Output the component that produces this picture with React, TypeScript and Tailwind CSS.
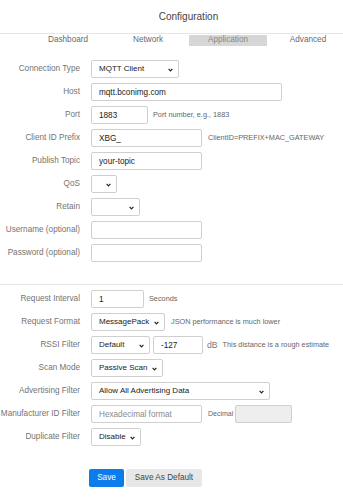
import React from "react";

const Chevron = () => (
  <svg className="absolute right-[5px] top-[7px]" width="5" height="4" viewBox="0 0 5 4">
    <path d="M0.6 0.8 L2.5 2.8 L4.4 0.8" fill="none" stroke="#222" strokeWidth="1.2" />
  </svg>
);

const Select = ({ width, value }: { width: string; value: string }) => (
  <div
    className={`relative ${width} flex h-[18px] shrink-0 items-center rounded-[2px] border border-[#cfcfcf] bg-white pl-[7px] text-[8px] text-[#222]`}
  >
    <span className="whitespace-nowrap">{value}</span>
    <Chevron />
  </div>
);

const Input = ({
  width,
  value,
  placeholder,
  disabled,
}: {
  width: string;
  value?: string;
  placeholder?: string;
  disabled?: boolean;
}) => (
  <input
    defaultValue={value}
    placeholder={placeholder}
    disabled={disabled}
    className={`${width} h-[18px] shrink-0 rounded-[2px] border border-[#cfcfcf] px-[7px] text-[8.2px] text-[#222] outline-none placeholder:text-[#8a8a8a] ${
      disabled ? "bg-[#eeeeee]" : "bg-white"
    }`}
  />
);

const Row = ({ label, children }: { label: string; children: React.ReactNode }) => (
  <div className="flex h-[18px] items-center">
    <div className="w-[80px] shrink-0 whitespace-nowrap text-right text-[8.2px] text-[#747474]">{label}</div>
    <div className="ml-[11px] flex h-[18px] items-center">{children}</div>
  </div>
);

const Hint = ({ children, className = "" }: { children: React.ReactNode; className?: string }) => (
  <span className={`whitespace-nowrap text-[7.3px] text-[#666] ${className}`}>{children}</span>
);

export default function App() {
  const tabs = ["Dashboard", "Network", "Application", "Advanced"];

  return (
    <div
      className="h-[500px] w-[343px] overflow-hidden bg-white"
      style={{ fontFamily: '"Liberation Sans", Arial, sans-serif' }}
    >
      <div className="flex h-[33px] items-center justify-center pl-[34px] text-[10px] text-[#444]">
        Configuration
      </div>
      <div className="border-t border-[#e6e6e6]" />
      <div className="ml-[29px] mt-[1px] flex gap-[2px]">
        {tabs.map((t) => (
          <div
            key={t}
            className={`flex h-[11px] w-[78px] shrink-0 items-center justify-center text-[8.2px] ${
              t === "Application" ? "bg-[#d6d6d6] text-[#888]" : "text-[#6a6a6a]"
            }`}
          >
            {t}
          </div>
        ))}
      </div>

      <div className="mt-[14px] flex flex-col gap-[5px]">
        <Row label="Connection Type">
          <Select width="w-[88px]" value="MQTT Client" />
        </Row>
        <Row label="Host">
          <Input width="w-[191px]" value="mqtt.bconimg.com" />
        </Row>
        <Row label="Port">
          <Input width="w-[57px]" value="1883" />
          <Hint className="ml-[5px]">Port number, e.g., 1883</Hint>
        </Row>
        <Row label="Client ID Prefix">
          <Input width="w-[111px]" value="XBG_" />
          <Hint className="ml-[6px]">ClientID=PREFIX+MAC_GATEWAY</Hint>
        </Row>
        <Row label="Publish Topic">
          <Input width="w-[111px]" value="your-topic" />
        </Row>
        <Row label="QoS">
          <Select width="w-[26px]" value="" />
        </Row>
        <Row label="Retain">
          <Select width="w-[49px]" value="" />
        </Row>
        <Row label="Username (optional)">
          <Input width="w-[111px]" />
        </Row>
        <Row label="Password (optional)">
          <Input width="w-[111px]" />
        </Row>
      </div>

      <div className="mt-[22px] border-t border-[#e6e6e6]" />

      <div className="mt-[5px] flex flex-col gap-[5px]">
        <Row label="Request Interval">
          <Input width="w-[53px]" value="1" />
          <Hint className="ml-[5px]">Seconds</Hint>
        </Row>
        <Row label="Request Format">
          <Select width="w-[74px]" value="MessagePack" />
          <Hint className="ml-[6px]">JSON performance is much lower</Hint>
        </Row>
        <Row label="RSSI Filter">
          <Select width="w-[59px]" value="Default" />
          <div className="ml-[3px] flex">
            <Input width="w-[50px]" value="-127" />
          </div>
          <span className="ml-[4px] text-[8.6px] text-[#777]">dB</span>
          <Hint className="ml-[5px]">This distance is a rough estimate</Hint>
        </Row>
        <Row label="Scan Mode">
          <Select width="w-[72px]" value="Passive Scan" />
        </Row>
        <Row label="Advertising Filter">
          <Select width="w-[179px]" value="Allow All Advertising Data" />
        </Row>
        <Row label="Manufacturer ID Filter">
          <Input width="w-[111px]" placeholder="Hexadecimal format" />
          <Hint className="ml-[6px] text-[7px]">Decimal</Hint>
          <div className="ml-[2px] flex">
            <Input width="w-[57px]" disabled />
          </div>
        </Row>
        <Row label="Duplicate Filter">
          <Select width="w-[50px]" value="Disable" />
        </Row>
      </div>

      <div className="ml-[89px] mt-[23px] flex gap-[2px]">
        <button className="h-[18px] w-[35px] rounded-[2px] bg-[#0b7ce9] text-[8.2px] text-white">Save</button>
        <button className="h-[18px] w-[76px] rounded-[2px] bg-[#e7e7e7] text-[8.2px] text-[#444]">
          Save As Default
        </button>
      </div>
    </div>
  );
}
